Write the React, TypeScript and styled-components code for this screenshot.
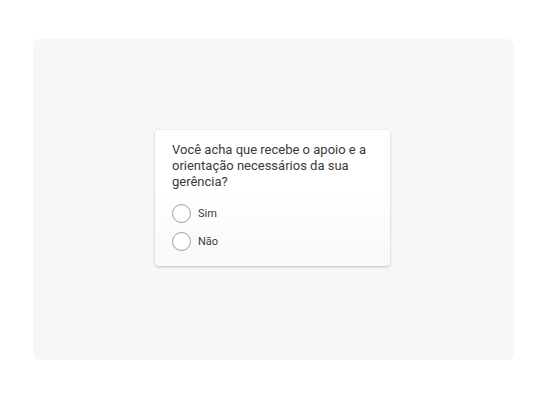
import React from "react";
import styled, { createGlobalStyle } from "styled-components";

const Global = createGlobalStyle`
  html, body { margin: 0; padding: 0; background: #ffffff; }
  body { font-family: Roboto, "Liberation Sans", Arial, sans-serif; }
`;

const Page = styled.div`
  width: 547px;
  height: 400px;
  padding: 39px 33px 40px 33px;
  box-sizing: border-box;
`;

const Panel = styled.div`
  width: 481px;
  height: 321px;
  background: #f7f7f7;
  border-radius: 7px;
  display: flex;
  align-items: center;
  justify-content: center;
`;

const Card = styled.div`
  width: 235px;
  box-sizing: border-box;
  padding: 12px 16px 16px 17px;
  background: linear-gradient(180deg, #ffffff 0%, #ffffff 45%, #f8f8f8 100%);
  border-radius: 4px;
  box-shadow: 0 1px 3px rgba(0, 0, 0, 0.22), 0 0 1px rgba(0, 0, 0, 0.06);
  margin-right: 2px;
  margin-bottom: 3px;
`;

const Question = styled.p`
  margin: 0 0 14px 0;
  font-size: 13px;
  line-height: 16px;
  color: #3a3a3a;
`;

const Options = styled.div`
  display: flex;
  flex-direction: column;
  gap: 10px;
`;

const Option = styled.label`
  display: flex;
  align-items: center;
  gap: 7px;
  height: 18px;
  font-size: 11px;
  color: #3a3a3a;
  cursor: pointer;
`;

const Radio = styled.span`
  width: 17px;
  height: 17px;
  border: 1px solid #9e9e9e;
  border-radius: 50%;
  background: #ffffff;
  flex: none;
`;

export default function App() {
  return (
    <>
      <Global />
      <Page>
        <Panel>
          <Card>
            <Question>
              Você acha que recebe o apoio e a orientação necessários da sua
              gerência?
            </Question>
            <Options>
              <Option>
                <Radio />
                Sim
              </Option>
              <Option>
                <Radio />
                Não
              </Option>
            </Options>
          </Card>
        </Panel>
      </Page>
    </>
  );
}
